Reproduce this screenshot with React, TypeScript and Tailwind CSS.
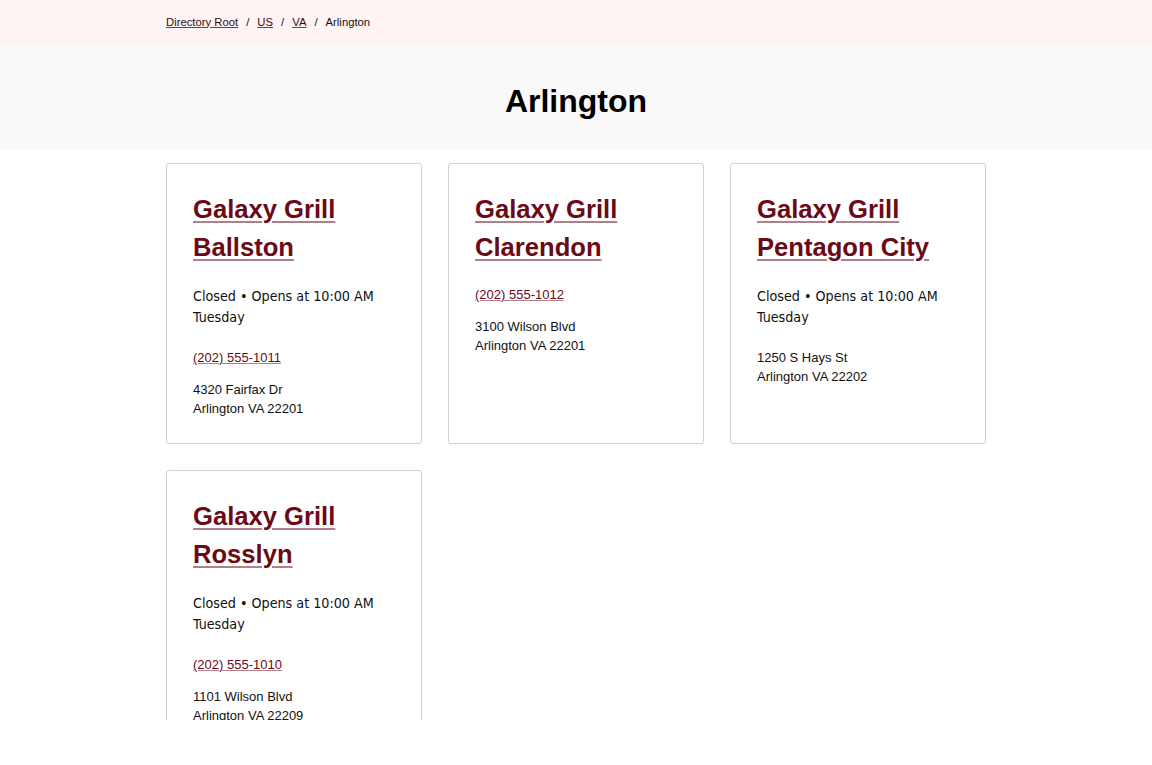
import React from "react";

type Loc = { name: string[]; status?: boolean; phone: string; addr1: string; addr2: string };

const locs: Loc[] = [
  { name: ["Galaxy Grill", "Ballston"], status: true, phone: "(202) 555-1011", addr1: "4320 Fairfax Dr", addr2: "Arlington VA 22201" },
  { name: ["Galaxy Grill", "Clarendon"], phone: "(202) 555-1012", addr1: "3100 Wilson Blvd", addr2: "Arlington VA 22201" },
  { name: ["Galaxy Grill", "Pentagon City"], status: true, phone: "", addr1: "1250 S Hays St", addr2: "Arlington VA 22202" },
  { name: ["Galaxy Grill", "Rosslyn"], status: true, phone: "(202) 555-1010", addr1: "1101 Wilson Blvd", addr2: "Arlington VA 22209" },
];

function Card({ l }: { l: Loc }) {
  return (
    <div className="border border-[#d0d0d0] rounded-[3px] h-[281px] pt-[26px] px-[26px] bg-white">
      <a href="#" className="block text-[25.6px] leading-[38px] font-bold text-[#6b0a16] underline decoration-[#b08088] decoration-[2px] underline-offset-[3px] [font-family:'Liberation_Sans',Arial,sans-serif]">
        {l.name[0]}
        <br />
        {l.name[1]}
      </a>
      {l.status && (
        <div className="mt-[20px] text-[14.2px] leading-[21px] text-[#111] [font-family:'DejaVu_Sans_Condensed','DejaVu_Sans',sans-serif]">
          Closed • Opens at 10:00 AM
          <br />
          Tuesday
        </div>
      )}
      {l.phone && (
        <a href="#" className={`block text-[13px] leading-[19px] text-[#6b0a16] underline decoration-[#b08088] [font-family:'Liberation_Sans',Arial,sans-serif] ${l.status ? "mt-[20px]" : "mt-[19px]"}`}>
          {l.phone}
        </a>
      )}
      <div className={`${l.phone ? "mt-[13px]" : "mt-[20px]"} text-[13px] leading-[19px] text-[#111] [font-family:'Liberation_Sans',Arial,sans-serif]`}>
        {l.addr1}
        <br />
        {l.addr2}
      </div>
    </div>
  );
}

export default function App() {
  return (
    <div className="h-[720px] overflow-hidden bg-white [font-family:'Liberation_Sans',Arial,sans-serif]">
      <div className="bg-[#fff4f4] h-[44px]">
        <div className="w-[820px] mx-auto flex items-center h-full text-[11.3px] text-[#111]">
          <a href="#" className="underline text-[#3a0a14] decoration-[#8a3040]">Directory Root</a>
          <span className="mx-[8px]">/</span>
          <a href="#" className="underline text-[#3a0a14] decoration-[#8a3040]">US</a>
          <span className="mx-[8px]">/</span>
          <a href="#" className="underline text-[#3a0a14] decoration-[#8a3040]">VA</a>
          <span className="mx-[8px]">/</span>
          <span>Arlington</span>
        </div>
      </div>
      <div className="bg-[#f9f9f9] h-[106px] flex items-center justify-center pt-[8px]">
        <h1 className="text-[32px] font-bold text-black">Arlington</h1>
      </div>
      <div className="w-[820px] mx-auto mt-[13px] grid grid-cols-3 gap-[26px]">
        {locs.map((l, i) => (
          <Card key={i} l={l} />
        ))}
      </div>
    </div>
  );
}
